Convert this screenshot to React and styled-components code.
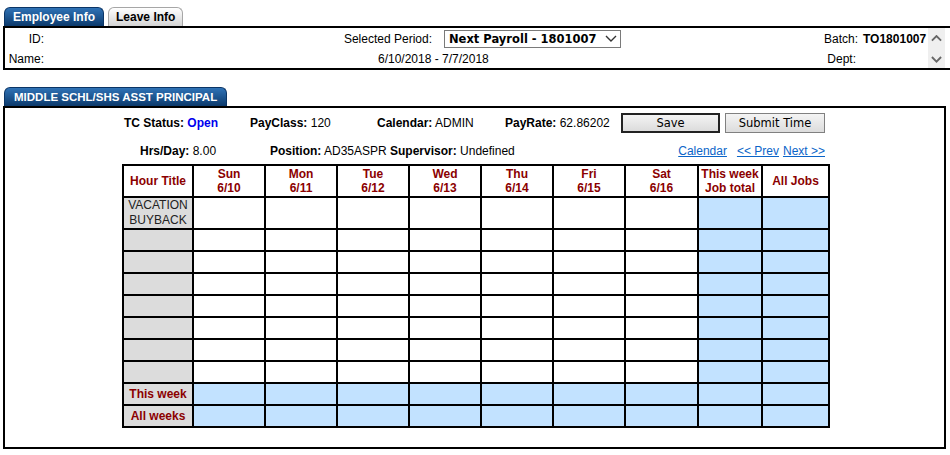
import React from 'react';
import styled, { createGlobalStyle, css } from 'styled-components';

const Global = createGlobalStyle`
  html, body { margin: 0; padding: 0; background: #fff; overflow: hidden; }
  body { font-family: "Liberation Sans", Arial, sans-serif; font-size: 12px; color: #000; }
`;

const TabRow = styled.div`
  display: flex;
  gap: 4px;
  padding: 7px 0 0 4px;
`;

const Tab = styled.div`
  height: 19px;
  box-sizing: border-box;
  padding: 0 ${p => p.$pad || 10}px;
  display: flex;
  align-items: center;
  font-weight: bold;
  font-size: ${p => p.$fs || 12}px;
  border-radius: 6px 6px 0 0;
  white-space: nowrap;
  ${p => p.$active
    ? css`
        background: linear-gradient(#2f72b6, #0c3a6c);
        color: #fff;
        border: 1px solid #0b3566;
        border-bottom: none;
      `
    : css`
        background: linear-gradient(#ffffff, #d4d4d4);
        color: #000;
        border: 1px solid #a6a6a6;
        border-bottom: none;
      `}
`;

const InfoBox = styled.div`
  margin-left: 3px;
  border: 2px solid #000;
  border-right: none;
  height: 44px;
  box-sizing: border-box;
  display: grid;
  grid-template-columns: 41px 250px 140px 214px 210px 68px 17px 1fr;
  grid-template-rows: 22px 18px;
  align-items: center;
`;

const InfoLabel = styled.div`
  grid-column: ${p => p.$col};
  grid-row: ${p => p.$row};
  text-align: right;
  padding-right: ${p => p.$pr ?? 2}px;
  white-space: nowrap;
`;

const InfoValue = styled.div`
  grid-column: ${p => p.$col};
  grid-row: ${p => p.$row};
  padding-left: 3px;
  font-weight: bold;
  white-space: nowrap;
`;

const PeriodSelect = styled.div`
  grid-column: 4;
  grid-row: 1;
  margin-left: 8px;
  width: 177px;
  height: 18px;
  box-sizing: border-box;
  border: 1px solid #7a7a7a;
  display: flex;
  align-items: center;
  justify-content: space-between;
  padding: 0 3px 0 4px;
  font-family: "DejaVu Sans", Verdana, sans-serif;
  font-size: 11.5px;
  font-weight: bold;
  white-space: nowrap;
`;

const DateRange = styled.div`
  grid-column: 3 / 5;
  grid-row: 2;
  padding-left: 82px;
  white-space: nowrap;
`;

const ScrollCol = styled.div`
  grid-column: 7;
  grid-row: 1 / 3;
  align-self: stretch;
  background: #efefef;
  display: flex;
  flex-direction: column;
  align-items: center;
  justify-content: space-between;
  padding: 7px 0 5px;
`;

const SectionTab = styled(Tab)`
  margin: 17px 0 0 4px;
  width: fit-content;
`;

const Panel = styled.div`
  margin-left: 3px;
  width: 943px;
  height: 343px;
  box-sizing: border-box;
  border: 2px solid #000;
  padding-top: 5px;
`;

const Inner = styled.div`
  width: 706px;
  margin-left: 117px;
`;

const StatusRow = styled.div`
  display: grid;
  grid-template-columns: 126px 127px 128px 116px 104px 100px;
  padding-left: 2px;
  height: 20px;
  align-items: center;
`;

const DetailRow = styled.div`
  display: flex;
  align-items: center;
  height: 16px;
  margin-top: 10px;
  padding-left: 18px;
  padding-right: 3px;
`;

const Field = styled.div`
  white-space: nowrap;
  width: ${p => (p.$w ? `${p.$w}px` : 'auto')};
  b { font-weight: bold; }
`;

const Blue = styled.span`
  color: #0000ee;
  font-weight: bold;
`;

const Button = styled.div`
  box-sizing: border-box;
  width: ${p => p.$w}px;
  height: 20px;
  display: flex;
  align-items: center;
  justify-content: center;
  font-family: "DejaVu Sans", Verdana, sans-serif;
  font-size: 11.5px;
  background: linear-gradient(#f4f4f4, #dcdcdc);
  border: ${p => (p.$primary ? '2px solid #222' : '1px solid #808080')};
  color: #000;
`;

const Links = styled.div`
  margin-left: auto;
  display: flex;
  gap: 4px;
`;

const Link = styled.a`
  color: #0a64c8;
  text-decoration: underline;
  margin-right: ${p => p.$mr || 0}px;
  white-space: nowrap;
  cursor: pointer;
`;

const Grid = styled.table`
  margin-top: 5px;
  width: 706px;
  table-layout: fixed;
  border-collapse: collapse;
`;

const Cell = styled.td`
  border: 2px solid #000;
  padding: 0;
  height: ${p => p.$h || 20}px;
  text-align: center;
  vertical-align: middle;
  font-size: 12px;
  line-height: 14px;
  background: ${p =>
    p.$kind === 'title' ? '#dcdcdc' : p.$kind === 'blue' ? '#c2e2ff' : '#fff'};
  color: #8b0000;
  font-weight: ${p => (p.$head ? 'bold' : 'normal')};
`;

const TitleText = styled.div`
  color: #222;
  line-height: 15px;
`;

const ChevronDown = ({ size = 12, color = '#555', w = 2 }) => (
  <svg width={size} height={size * 0.6} viewBox="0 0 12 7">
    <polyline points="1,1 6,6 11,1" fill="none" stroke={color} strokeWidth={w} />
  </svg>
);

const ChevronUp = ({ size = 12, color = '#555', w = 2 }) => (
  <svg width={size} height={size * 0.6} viewBox="0 0 12 7">
    <polyline points="1,6 6,1 11,6" fill="none" stroke={color} strokeWidth={w} />
  </svg>
);

const days = [
  ['Sun', '6/10'],
  ['Mon', '6/11'],
  ['Tue', '6/12'],
  ['Wed', '6/13'],
  ['Thu', '6/14'],
  ['Fri', '6/15'],
  ['Sat', '6/16'],
];

const colWidths = [70, 72, 72, 72, 72, 72, 72, 73, 64, 67];

function BodyRow({ title, h }) {
  return (
    <tr>
      <Cell $kind="title" $h={h}>
        {title && <TitleText>{title}</TitleText>}
      </Cell>
      {days.map(d => (
        <Cell key={d[0]} $h={h} />
      ))}
      <Cell $kind="blue" $h={h} />
      <Cell $kind="blue" $h={h} />
    </tr>
  );
}

function TotalRow({ label }) {
  return (
    <tr>
      <Cell $kind="title" $head>
        {label}
      </Cell>
      {days.map(d => (
        <Cell key={d[0]} $kind="blue" />
      ))}
      <Cell $kind="blue" />
      <Cell $kind="blue" />
    </tr>
  );
}

export default function App() {
  return (
    <>
      <Global />
      <TabRow>
        <Tab $active $pad={8}>Employee Info</Tab>
        <Tab $pad={7}>Leave Info</Tab>
      </TabRow>
      <InfoBox>
        <InfoLabel $col={1} $row={1}>ID:</InfoLabel>
        <InfoLabel $col={3} $row={1} $pr={4}>Selected Period:</InfoLabel>
        <PeriodSelect>
          <span>Next Payroll - 1801007</span>
          <ChevronDown size={12} color="#333" w={1.4} />
        </PeriodSelect>
        <InfoLabel $col={5} $row={1}>Batch:</InfoLabel>
        <InfoValue $col={6} $row={1}>TO1801007</InfoValue>
        <InfoLabel $col={1} $row={2}>Name:</InfoLabel>
        <DateRange>6/10/2018 - 7/7/2018</DateRange>
        <InfoLabel $col={5} $row={2} $pr={4}>Dept:</InfoLabel>
        <ScrollCol>
          <ChevronUp size={11} color="#666" w={2} />
          <ChevronDown size={11} color="#666" w={2} />
        </ScrollCol>
      </InfoBox>

      <SectionTab $active $pad={9} $fs={11.5}>MIDDLE SCHL/SHS ASST PRINCIPAL</SectionTab>
      <Panel>
        <Inner>
          <StatusRow>
            <Field>
              <b>TC Status:</b> <Blue>Open</Blue>
            </Field>
            <Field>
              <b>PayClass:</b> 120
            </Field>
            <Field>
              <b>Calendar:</b> ADMIN
            </Field>
            <Field>
              <b>PayRate:</b> 62.86202
            </Field>
            <Button $w={99} $primary>Save</Button>
            <Button $w={100}>Submit Time</Button>
          </StatusRow>
          <DetailRow>
            <Field $w={130}>
              <b>Hrs/Day:</b> 8.00
            </Field>
            <Field>
              <b>Position:</b> AD35ASPR <b>Supervisor:</b> Undefined
            </Field>
            <Links>
              <Link $mr={6}>Calendar</Link>
              <Link>&lt;&lt; Prev</Link>
              <Link>Next &gt;&gt;</Link>
            </Links>
          </DetailRow>
          <Grid>
            <colgroup>
              {colWidths.map((w, i) => (
                <col key={i} style={{ width: w }} />
              ))}
            </colgroup>
            <thead>
              <tr>
                <Cell $head $h={30}>Hour Title</Cell>
                {days.map(d => (
                  <Cell key={d[0]} $head $h={30}>
                    {d[0]}
                    <br />
                    {d[1]}
                  </Cell>
                ))}
                <Cell $head $h={30}>
                  This week
                  <br />
                  Job total
                </Cell>
                <Cell $head $h={30}>All Jobs</Cell>
              </tr>
            </thead>
            <tbody>
              <BodyRow
                h={30}
                title={
                  <>
                    VACATION
                    <br />
                    BUYBACK
                  </>
                }
              />
              {Array.from({ length: 7 }).map((_, i) => (
                <BodyRow key={i} />
              ))}
              <TotalRow label="This week" />
              <TotalRow label="All weeks" />
            </tbody>
          </Grid>
        </Inner>
      </Panel>
    </>
  );
}
